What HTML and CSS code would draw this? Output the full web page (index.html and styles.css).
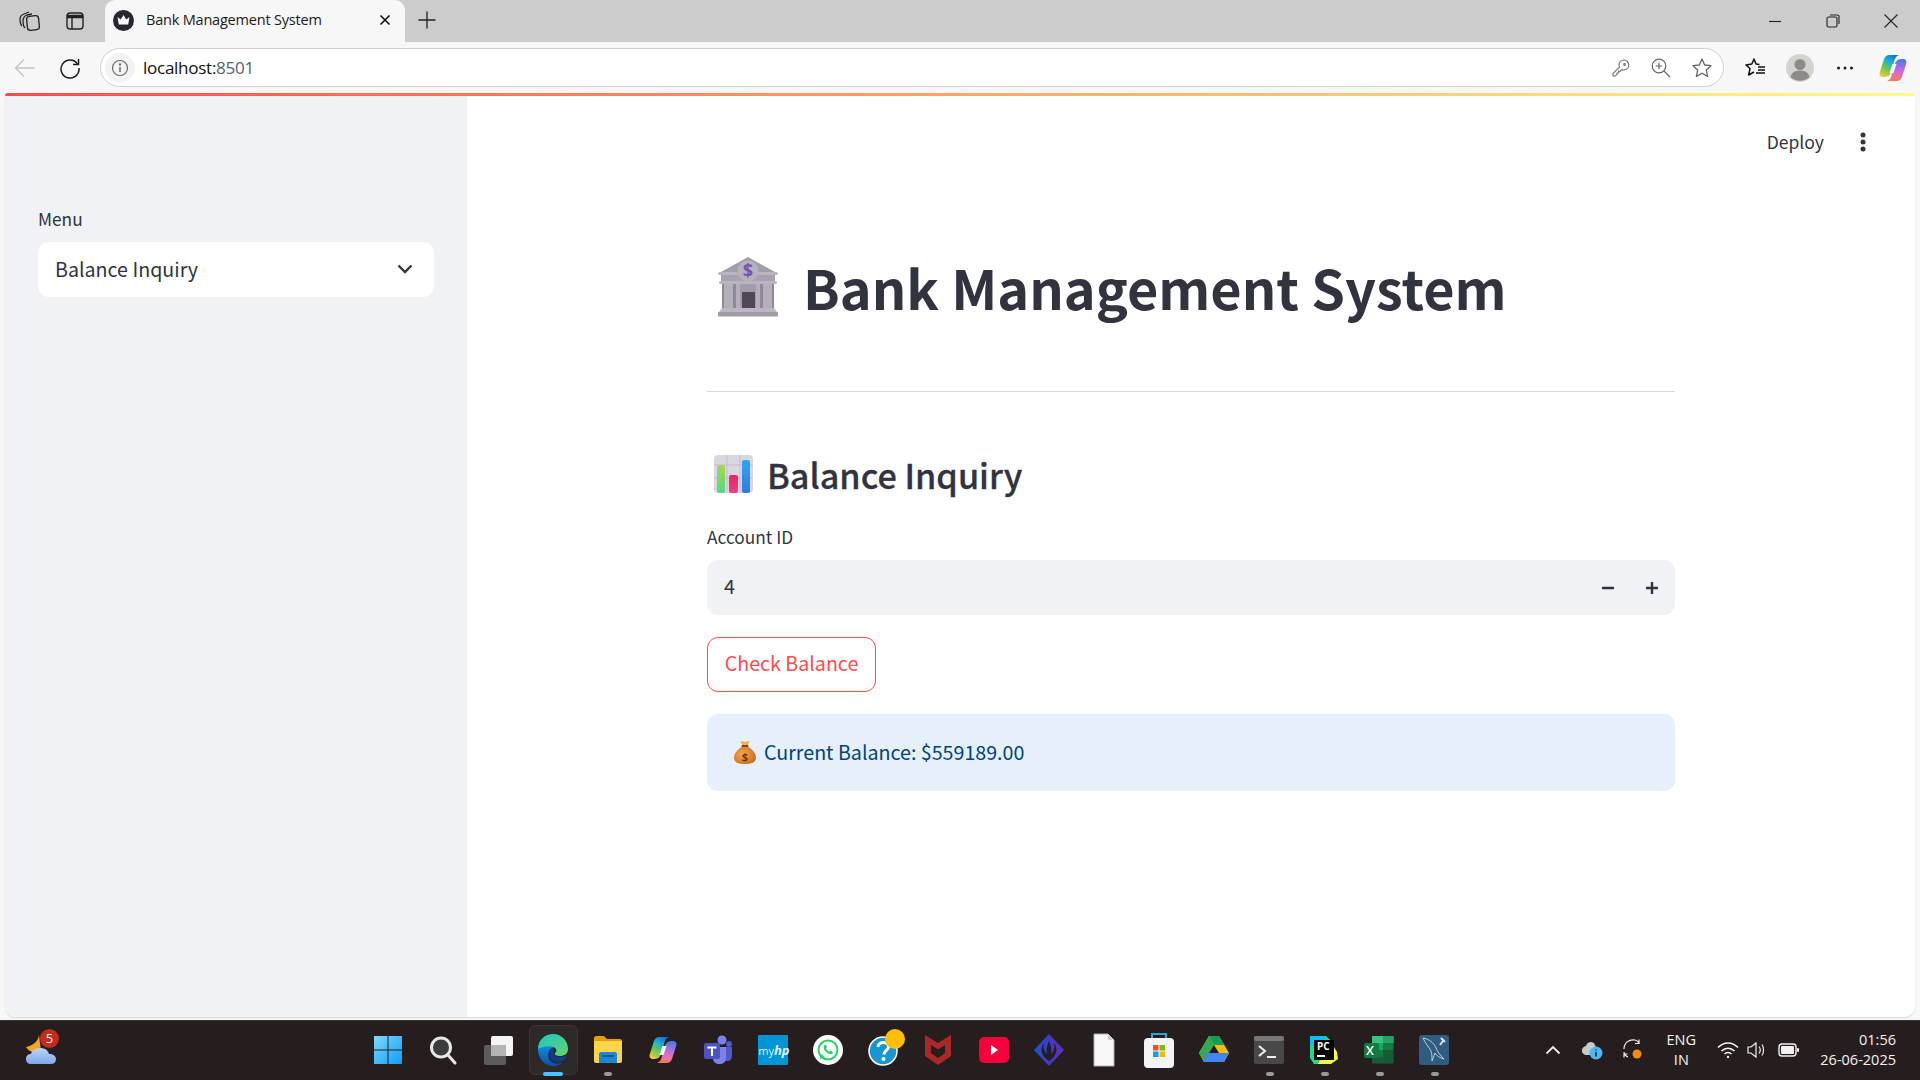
FILE: index.html
```html
<!DOCTYPE html>
<html lang="en">
<head>
<meta charset="utf-8">
<title>Bank Management System</title>
<link rel="stylesheet" href="styles.css">
</head>
<body>
<svg class="defs" width="0" height="0">
  <defs>
    <linearGradient id="cpA" x1=".7" y1="0" x2=".2" y2="1"><stop offset="0" stop-color="#1b6fe0"/><stop offset=".3" stop-color="#18b0d8"/><stop offset=".65" stop-color="#6fcb4a"/><stop offset="1" stop-color="#f6c83c"/></linearGradient>
    <linearGradient id="cpB" x1=".6" y1="0" x2=".5" y2="1"><stop offset="0" stop-color="#3a7ee8"/><stop offset=".4" stop-color="#b16be6"/><stop offset=".75" stop-color="#ef6fb0"/><stop offset="1" stop-color="#f47c50"/></linearGradient>
    <symbol id="copilot" viewBox="0 0 28 28">
      <path d="M18 27H8c3-1 4-3 5-7l2.500-9c.8-3 3-6 7-6H24c2.500 0 4 2 3.300 4.500L23 23c-1 2.500-3 4-5 4z" fill="url(#cpB)"/>
      <path d="M10 1h10c-3 1-4 3-5 7l-2.500 9c-.8 3-3 6-7 6H4c-2.500 0-4-2-3.300-4.500L5 5C6 2.500 8 1 10 1z" fill="url(#cpA)"/>
      <path d="M13.500 10h4l-3 9h-4z" fill="#fff"/>
    </symbol>
  </defs>
</svg>
<div class="tabbar">
  <div class="tb-left">
    <svg class="ic" width="24" height="24" viewBox="0 0 24 24" fill="none" stroke="#222" stroke-width="1.3"><rect x="9" y="7" width="12" height="14" rx="3" transform="rotate(-6 15 14)"/><path d="M7 19C5 17 5 15 5 12c0-3 1-5 4-6l5-1"/><path d="M4 17C2 15 2 13 2 10c0-3 1-4 4-5l5-2"/></svg>
    <svg class="ic" width="24" height="24" viewBox="0 0 24 24" fill="none" stroke="#222" stroke-width="1.4"><rect x="4" y="4" width="16" height="16" rx="3"/><path d="M4 7.500h16" stroke-width="3.500"/><path d="M9 8v12"/></svg>
  </div>
  <div class="tab">
    <svg class="favicon" width="21" height="21" viewBox="0 0 21 21"><circle cx="10.500" cy="10.500" r="10.500" fill="#262730"/><path d="M4.500 7l3.200 2.500L10.500 5l2.800 4.500L16.500 7l-1.300 7.500H5.800z" fill="#fff"/></svg>
    <span class="tab-title">Bank Management System</span>
    <svg class="tab-x" width="14" height="14" viewBox="0 0 14 14" stroke="#111" stroke-width="1.600"><path d="M2.500 2.500l9 9M11.500 2.500l-9 9"/></svg>
  </div>
  <svg class="newtab" width="20" height="20" viewBox="0 0 20 20" stroke="#222" stroke-width="1.300"><path d="M10 1.500v17M1.500 10h17"/></svg>
  <div class="winctl">
    <svg width="16" height="16" viewBox="0 0 16 16" stroke="#222" stroke-width="1.100"><path d="M2 8.500h12"/></svg>
    <svg width="16" height="16" viewBox="0 0 16 16" fill="none" stroke="#222" stroke-width="1.100"><rect x="2" y="4" width="10" height="10" rx="1.500"/><path d="M5 2h7.500A1.500 1.500 0 0 1 14 3.500V11"/></svg>
    <svg width="16" height="16" viewBox="0 0 16 16" stroke="#222" stroke-width="1.100"><path d="M1.500 1.500l13 13M14.500 1.500l-13 13"/></svg>
  </div>
</div>
<div class="toolbar">
  <svg class="nav-back" width="22" height="22" viewBox="0 0 22 22" fill="none" stroke="#c4c4c4" stroke-width="1.400"><path d="M1.500 11h19M10 2.500L1.500 11l8.500 8.500"/></svg>
  <svg class="nav-reload" width="22" height="22" viewBox="0 0 22 22" fill="none" stroke="#1c1c1c" stroke-width="1.500"><path d="M18.500 7A9 9 0 1 0 20 11"/><path d="M19.500 2v5.500H14"/></svg>
  <div class="omnibox">
    <span class="info-pill"><svg width="18" height="18" viewBox="0 0 18 18" fill="none" stroke="#6b6b6b" stroke-width="1.200"><circle cx="9" cy="9" r="7.500"/><path d="M9 8v5" stroke-width="1.500"/><circle cx="9" cy="5.500" r=".6" fill="#6b6b6b"/></svg></span>
    <span class="url">localhost:<span class="url-port">8501</span></span>
    <span class="omni-icons">
      <svg width="20" height="20" viewBox="0 0 20 20" fill="none" stroke="#777" stroke-width="1.200"><path d="M12.800 2a5 5 0 0 1 5 5c0 3-2.300 5-5 5-.8 0-1.400-.1-2-.4L9 13.300H7.500V15H6v1.500L4 18H2v-2.500l6.500-6.300c-.3-.7-.5-1.400-.5-2.200a5 5 0 0 1 4.800-5z"/><circle cx="13.500" cy="6.500" r=".8"/></svg>
      <svg width="20" height="20" viewBox="0 0 20 20" fill="none" stroke="#666" stroke-width="1.200"><circle cx="8" cy="8" r="6.800"/><path d="M13 13l6 6M8 4.800v6.400M4.800 8h6.400"/></svg>
      <svg width="22" height="22" viewBox="0 0 22 22" fill="none" stroke="#666" stroke-width="1.300" stroke-linejoin="round"><path d="M11 2l2.700 6 6.300.7-4.700 4.300 1.300 6.400L11 16.200l-5.600 3.200 1.300-6.400L2 8.700 8.300 8z"/></svg>
    </span>
  </div>
  <div class="tool-right">
    <svg width="22" height="22" viewBox="0 0 22 22" fill="none" stroke="#111" stroke-width="1.500" stroke-linejoin="round"><path d="M15.500 7.500L12 7 10 2 7.800 7 2 8l4 3.500L4.700 18l5.300-3"/><path d="M14 10h7M14 13h7M12 16h9" stroke-width="1.300"/></svg>
    <span class="avatar"><svg width="28" height="28" viewBox="0 0 28 28"><circle cx="14" cy="14" r="14" fill="#d4d3cf"/><circle cx="14" cy="10.500" r="5.500" fill="#8f8c87"/><path d="M4.500 23c1-4.500 5-6.500 9.500-6.500s8.500 2 9.500 6.500a14 14 0 0 1-19 0z" fill="#8f8c87"/></svg></span>
    <svg class="dots" width="18" height="6" viewBox="0 0 18 6" fill="#1a1a1a"><circle cx="2.500" cy="3" r="1.500"/><circle cx="9" cy="3" r="1.500"/><circle cx="15.500" cy="3" r="1.500"/></svg>
    <svg class="cp" width="28" height="28" viewBox="0 0 28 28"><use href="#copilot"/></svg>
  </div>
</div>
<div class="viewport">
  <div class="rainbow"></div>
  <div class="app">
    <aside class="sidebar">
      <label class="sb-label">Menu</label>
      <div class="select">
        <span>Balance Inquiry</span>
        <svg width="16" height="10" viewBox="0 0 16 10" fill="none" stroke="#31333f" stroke-width="2.400"><path d="M1.500 1.500L8 8l6.500-6.500"/></svg>
      </div>
    </aside>
    <main class="main">
      <div class="st-header">
        <span class="deploy">Deploy</span>
        <svg class="kebab" width="6" height="20" viewBox="0 0 6 20" fill="#31333f"><circle cx="3" cy="3" r="2.500"/><circle cx="3" cy="10" r="2.500"/><circle cx="3" cy="17" r="2.500"/></svg>
      </div>
      <div class="content">
        <h1 class="title">
          <svg class="e-bank" width="60" height="60" viewBox="0 0 60 60">
            <path d="M30 0L3 15h54z" fill="#a39dab"/>
            <rect x="4" y="27" width="52" height="24" fill="#8f8996"/>
            <rect x="6" y="27" width="9" height="24" fill="#b5afbb"/>
            <rect x="18" y="27" width="4" height="24" fill="#b5afbb"/>
            <rect x="38" y="27" width="4" height="24" fill="#b5afbb"/>
            <rect x="45" y="27" width="9" height="24" fill="#b5afbb"/>
            <rect x="22" y="27" width="16" height="24" fill="#a29ca9"/>
            <rect x="24" y="35" width="13" height="16" fill="#4f4658"/>
            <rect x="0" y="15" width="60" height="3" rx="1.500" fill="#bab4c0"/>
            <rect x="3" y="18" width="54" height="6" fill="#a8a2b0"/>
            <rect x="1" y="24" width="58" height="3" rx="1.500" fill="#bab4c0"/>
            <circle cx="30" cy="14" r="10.500" fill="#b7b1bd"/>
            <text class="e-dollar" x="30" y="20" text-anchor="middle">$</text>
            <path d="M4 51h52l3 4H1z" fill="#bcb6c2"/>
            <rect x="0" y="55" width="60" height="4.500" rx="1" fill="#a29ca9"/>
          </svg>
          <span>Bank Management System</span>
        </h1>
        <hr class="rule">
        <h2 class="subtitle">
          <svg class="e-chart" width="39" height="38" viewBox="0 0 39 38">
            <defs>
              <linearGradient id="chG" x1="0" y1="0" x2="0" y2="1"><stop offset="0" stop-color="#a8d850"/><stop offset="1" stop-color="#54d88a"/></linearGradient>
              <linearGradient id="chR" x1="0" y1="0" x2="0" y2="1"><stop offset="0" stop-color="#e8245c"/><stop offset="1" stop-color="#ea3f8a"/></linearGradient>
              <linearGradient id="chB" x1="0" y1="0" x2="0" y2="1"><stop offset="0" stop-color="#2ba8f0"/><stop offset="1" stop-color="#2f7be0"/></linearGradient>
            </defs>
            <rect width="39" height="38" rx="4" fill="#dcd6e3"/>
            <path d="M13 0v38M26 0v38M0 10h39M0 23h39" stroke="#c5bfcd" stroke-width="1"/>
            <rect x="3" y="10" width="8" height="28" rx="2" fill="url(#chG)"/>
            <rect x="15" y="20" width="9" height="18" rx="2" fill="url(#chR)"/>
            <rect x="28" y="5" width="8" height="33" rx="2" fill="url(#chB)"/>
          </svg>
          <span>Balance Inquiry</span>
        </h2>
        <label class="field-label">Account ID</label>
        <div class="number">
          <span class="num-value">4</span>
          <svg class="num-btn" width="56" height="14" viewBox="0 0 56 14" stroke="#31333f" stroke-width="2.400" fill="none"><path d="M0 7h12M56 7H44M50 1v12"/></svg>
        </div>
        <button class="btn" type="button">Check Balance</button>
        <div class="alert">
          <svg class="e-bag" width="22" height="24" viewBox="0 0 22 24">
            <defs><radialGradient id="bagG" cx=".4" cy=".45" r=".7"><stop offset="0" stop-color="#f5a94a"/><stop offset="1" stop-color="#c86a1e"/></radialGradient></defs>
            <path d="M6.500 1.500c2-.8 3 .3 4.500.3S13.500.7 15.500 1.500L13.500 6h-5z" fill="#f0b04a"/>
            <path d="M8 6.500h6c4.500 3 8 7 8 11 0 4.500-3.500 6.500-11 6.500S0 22 0 17.500c0-4 3.500-8 8-11z" fill="url(#bagG)"/>
            <rect x="7.500" y="5" width="7" height="2" rx="1" fill="#7c4a20"/>
            <text class="e-dollar2" x="11" y="20.500" text-anchor="middle">$</text>
          </svg>
          <span>Current Balance: $559189.00</span>
        </div>
      </div>
    </main>
  </div>
</div>
<footer class="taskbar">
  <div class="weather">
    <svg width="30" height="29" viewBox="0 0 30 29">
      <defs><linearGradient id="cloudG" x1="0" y1="0" x2="0" y2="1"><stop offset="0" stop-color="#bcd3f8"/><stop offset="1" stop-color="#7da8ec"/></linearGradient></defs>
      <path d="M13 0C12 6 8 10 0 12c3 5 9 7 15 4z" fill="#f5a623"/>
      <path d="M5 29c-3 0-5-2-5-5 0-3 2-5 5-5 .5-3 4-6 9-6 4.500 0 8 2 9 6 4 0 7 2 7 5 0 3-2 5-5 5z" fill="url(#cloudG)"/>
    </svg>
    <span class="badge">5</span>
  </div>
  <div class="apps">
    <span class="slot"><svg width="30" height="30" viewBox="0 0 30 30"><defs><linearGradient id="wG" x1="0" y1="0" x2="1" y2="1"><stop offset="0" stop-color="#7fd9ff"/><stop offset="1" stop-color="#0f9bf5"/></linearGradient></defs><path d="M1 1h13.500v13.500H1zM15.500 1H29v13.500H15.500zM1 15.500h13.500V29H1zM15.500 15.500H29V29H15.500z" fill="url(#wG)"/></svg></span>
    <span class="slot"><svg width="28" height="30" viewBox="0 0 28 30" fill="#3c3c3c" stroke="#e8e8e8" stroke-width="3"><circle cx="12" cy="12.500" r="9.500"/><path d="M19 20l7 8" stroke-linecap="round"/></svg></span>
    <span class="slot"><svg width="30" height="30" viewBox="0 0 30 30"><rect x="1" y="10" width="22" height="20" rx="2" fill="#5c5c5c"/><rect x="8" y="1" width="22" height="20" rx="2" fill="#f4f4f4"/><rect x="8" y="10" width="15" height="11" fill="#b4b4b4"/></svg></span>
    <span class="slot slot-active"><svg width="32" height="34" viewBox="0 0 32 34"><defs><linearGradient id="eA" x1="0" y1="0" x2="1" y2="1"><stop offset="0" stop-color="#1ec4c8"/><stop offset="1" stop-color="#64d66a"/></linearGradient><linearGradient id="eB" x1="0" y1="0" x2="0" y2="1"><stop offset="0" stop-color="#0f8ed8"/><stop offset="1" stop-color="#0b4fa8"/></linearGradient></defs><path d="M1 16C1 7 8 1 16 1c9 0 15 7 15 15 0 5-4 7-8 7-3 0-6-1-5-3 1-1 2-2 1-4-2-3-8-3-11 1C5 20 5 19 1 16z" fill="url(#eA)"/><path d="M1 16c0 10 7 17 15 17 4 0 7-1 9-3-5 2-11 0-13-4-2-5 0-10 5-12-6-2-13 0-16 2z" fill="url(#eB)"/><path d="M12 20c0 6 5 10 11 9 4-1 6-3 7-6-2 1-4 1-7 1-5 0-7-2-6-6 1-2 0-3-1-3-3 0-4 3-4 5z" fill="#0b3f8c"/></svg></span>
    <span class="slot slot-open"><svg width="30" height="30" viewBox="0 0 30 30"><path d="M1 3c0-1 1-2 2-2h8l3 3h13c1 0 2 1 2 2v4H1z" fill="#e2a100"/><path d="M1 6h28v20c0 1-1 2-2 2H3c-1 0-2-1-2-2z" fill="#fcd34d"/><path d="M6 19c0-1 1-2 2-2h14c1 0 2 1 2 2v9H6z" fill="#1e88d8"/><rect x="9" y="20" width="12" height="2" fill="#0a5aa0"/></svg></span>
    <span class="slot"><svg width="28" height="28" viewBox="0 0 28 28"><use href="#copilot"/></svg></span>
    <span class="slot"><svg width="30" height="30" viewBox="0 0 30 30"><circle cx="19" cy="5" r="4.500" fill="#7b83eb"/><circle cx="26" cy="9" r="3" fill="#5059c9"/><path d="M21 12h8v9c0 3-2 5-4 5h-4z" fill="#5059c9"/><path d="M10 12h13v11c0 4-3 6-6.500 6S10 27 10 23z" fill="#7b83eb"/><rect x="1" y="8" width="16" height="16" rx="2" fill="#4b53bc"/><path d="M4.500 11.500h9v2H10V21H8v-7.500H4.500z" fill="#fff"/></svg></span>
    <span class="slot"><span class="myhp">my<i>hp</i></span></span>
    <span class="slot"><svg width="30" height="30" viewBox="0 0 30 30"><circle cx="15" cy="15" r="15" fill="#fff"/><circle cx="15" cy="15" r="9.500" fill="none" stroke="#25d366" stroke-width="2"/><path d="M7 24l1.500-5 3.500 3.500z" fill="#25d366"/><path d="M11 10.500c1-1.200 2-1 2.300 0l.6 1.600-1 1.200c.6 1.500 2 2.800 3.500 3.400l1.200-1 1.500.7c1 .5 1 1.500 0 2.300-3 2-10-3.500-8.100-8.200z" fill="#25d366"/></svg></span>
    <span class="slot slot-help"><svg width="30" height="32" viewBox="0 0 30 32"><circle cx="15" cy="17" r="14" fill="#1796d2" stroke="#fff" stroke-width="1.500"/><path d="M10 13c0-3 2.500-4.500 5.500-4.500S20.500 10 20.500 13c0 3.500-4.500 3.500-4.500 7.500" fill="none" stroke="#fff" stroke-width="3"/><circle cx="15.500" cy="25" r="2" fill="#fff"/></svg><span class="help-dot"></span></span>
    <span class="slot"><svg width="28" height="31" viewBox="0 0 28 31"><path d="M1 1l13 8 13-8v21L14 31 1 22z" fill="#a82a28"/><path d="M7 11v8l7 5 7-5v-8l-7 4.500z" fill="#261e1e"/></svg></span>
    <span class="slot"><svg width="30" height="26" viewBox="0 0 30 26"><rect width="30" height="26" rx="5" fill="#f5003a"/><path d="M12 8l7 5-7 5z" fill="#fff"/></svg></span>
    <span class="slot"><svg width="30" height="32" viewBox="0 0 30 32"><defs><linearGradient id="ideG" x1="0" y1="0" x2="1" y2="0"><stop offset="0" stop-color="#1f56c8"/><stop offset=".5" stop-color="#3a3cc4"/><stop offset="1" stop-color="#6a2cc0"/></linearGradient></defs><path d="M15 0l15 16-15 16L0 16z" fill="url(#ideG)"/><path d="M10 9C5 15 8 23 15 27c7-4 10-12 5-18 1 5 0 8-3 11 1-4 0-9-2-13-2 4-3 9-2 13-3-3-4-6-3-11z" fill="#261e1e"/></svg></span>
    <span class="slot"><svg width="22" height="34" viewBox="0 0 22 34"><path d="M1 1h14l6 6v26H1z" fill="#f8f8f8" stroke="#b0b0b0" stroke-width="1"/><path d="M15 1v6h6z" fill="#cfcfcf"/></svg></span>
    <span class="slot"><svg width="30" height="36" viewBox="0 0 30 36"><path d="M8 10V2h14v8" fill="none" stroke="#2aa6e0" stroke-width="2"/><rect y="6" width="30" height="30" rx="4" fill="#f4f4f4"/><rect x="9" y="13" width="5.500" height="5.500" fill="#f25022"/><rect x="15.500" y="13" width="5.500" height="5.500" fill="#7fba00"/><rect x="9" y="19.500" width="5.500" height="5.500" fill="#00a4ef"/><rect x="15.500" y="19.500" width="5.500" height="5.500" fill="#ffb900"/></svg></span>
    <span class="slot"><svg width="30" height="28" viewBox="0 0 30 28"><path d="M10 0h10l10 17-5 9H5L0 17z" fill="#fbbc04"/><path d="M10 0L0 17l5 9 10-17z" fill="#34a853"/><path d="M10 0h10l5 9H15z" fill="#0f9d58"/><path d="M8 17h22l-5 9H5z" fill="#4285f4"/><path d="M15 9l5 8H10z" fill="#261e1e"/></svg></span>
    <span class="slot slot-open"><svg width="30" height="28" viewBox="0 0 30 28"><rect width="30" height="28" rx="2" fill="#484848"/><rect width="30" height="5" rx="2" fill="#777"/><path d="M5 10l6 5-6 5" fill="none" stroke="#f0f0f0" stroke-width="2"/><path d="M13 21h9" stroke="#f0f0f0" stroke-width="2"/></svg></span>
    <span class="slot slot-open"><svg width="30" height="30" viewBox="0 0 30 30"><path d="M1 1h16l6 6-10 22H5L1 23z" fill="#21d789"/><path d="M1 1h15v10H1z" fill="#07c3f2"/><path d="M20 4l8 13 1 7-7 5H9z" fill="#fcf84a"/><rect x="5" y="5" width="20" height="20" fill="#000"/><text class="pc-text" x="8" y="15">PC</text><path d="M8 21h8" stroke="#fff" stroke-width="2"/></svg></span>
    <span class="slot slot-open"><svg width="30" height="30" viewBox="0 0 30 30"><path d="M8 1h20c1 0 1.500.5 1.500 1.500V8H8z" fill="#33c481"/><path d="M19 1h9.500c.5 0 1 .5 1 1V8H19z" fill="#21a366"/><rect x="8" y="8" width="11" height="7" fill="#21a366"/><rect x="19" y="8" width="10.500" height="7" fill="#107c41"/><rect x="8" y="15" width="11" height="7" fill="#107c41"/><rect x="19" y="15" width="10.500" height="7" fill="#185c37"/><path d="M8 22h21.500v5c0 1-.5 1.500-1.500 1.500H9.500C8.500 28.500 8 28 8 27z" fill="#185c37"/><rect y="8" width="15" height="15" rx="2" fill="#107c41"/><path d="M4 11l2 3.500 2-3.500h2l-3 4.500 3 4.500H8l-2-3.500L4 20H2l3-4.500L2 11z" fill="#fff"/></svg></span>
    <span class="slot slot-open"><svg width="30" height="30" viewBox="0 0 30 30"><rect width="30" height="30" rx="3" fill="#2f5c80"/><path d="M4 3c6 1 11 5 13 10 1 3 4 7 8 11-4-1-7-3-9-6l-3 8c0-4 0-7-1-10C10 12 6 8 4 3z" fill="none" stroke="#b9cedd" stroke-width="1"/><path d="M22 3l4 4M24 6l-3 4" stroke="#d8e4ee" stroke-width="2"/></svg></span>
  </div>
  <div class="tray">
    <svg class="t-chev" width="16" height="10" viewBox="0 0 16 10" fill="none" stroke="#f2f2f2" stroke-width="1.800"><path d="M1.500 8.500L8 2l6.500 6.500"/></svg>
    <svg class="t-cloud" width="22" height="20" viewBox="0 0 22 20"><path d="M3 14c-3-1-3-7 2-8 1-4 7-6 9-1 1 2 1 3 0 4l-3 6H4z" fill="#c9c9c9"/><circle cx="15" cy="13" r="6.500" fill="#4fb8ee"/><path d="M15 9.500v1M15 12v4.500" stroke="#10304a" stroke-width="1.600"/></svg>
    <svg class="t-sync" width="22" height="24" viewBox="0 0 22 24" fill="none" stroke="#eee" stroke-width="1.200"><path d="M2 11C2 5 7 1 13 2c2 .4 3 1 4 3M17 1.500V5.500H13"/><path d="M6 19c-2-1-4-3-4-5M2 19.500V16h3.500"/><circle cx="15" cy="16" r="4.500" fill="#f58a07" stroke="none"/></svg>
    <div class="lang"><span>ENG</span><span>IN</span></div>
    <svg class="t-wifi" width="22" height="18" viewBox="0 0 22 18" fill="none" stroke="#f5f5f5" stroke-width="1.600"><path d="M1 6.500c6-6 14-6 20 0M4.500 10c4-3.500 9-3.500 13 0M7.500 13c2-1.800 5-1.800 7 0"/><circle cx="11" cy="16" r="1.200" fill="#f5f5f5" stroke="none"/></svg>
    <svg class="t-vol" width="20" height="18" viewBox="0 0 20 18" fill="none" stroke="#f0f0f0" stroke-width="1.200"><path d="M1 6h3l5-4v14l-5-4H1z"/><path d="M12 5.500c1.500 2 1.500 5 0 7M15 3.500c2 3 2 8 0 11"/></svg>
    <svg class="t-bat" width="22" height="14" viewBox="0 0 22 14"><rect x="1" y="1" width="17" height="12" rx="3" fill="none" stroke="#f2f2f2" stroke-width="1.400"/><rect x="3" y="3" width="13" height="8" rx="1" fill="#f2f2f2"/><rect x="19" y="5" width="2" height="4" rx="1" fill="#f2f2f2"/></svg>
    <div class="clock"><span>01:56</span><span>26-06-2025</span></div>
  </div>
</footer>
</body>
</html>
```

FILE: styles.css
```css
* { box-sizing: border-box; }
html, body { margin: 0; padding: 0; }
body {
  width: 1920px; height: 1080px; overflow: hidden;
  display: flex; flex-direction: column;
  background: #f7f7f7;
  font-family: "Noto Sans CJK SC", "Noto Sans", sans-serif;
  color: #31333f;
}
svg { display: block; flex: none; }
.defs { position: absolute; }

/* browser tab strip */
.tabbar { height: 42px; background: #cccccc; display: flex; align-items: center; flex: none; }
.tb-left { display: flex; gap: 21px; padding-left: 18px; width: 105px; }
.tab {
  width: 300px; height: 42px; background: #f7f7f7; border-radius: 10px 10px 0 0;
  display: flex; align-items: center; padding: 0 13px 2px 8px;
}
.tab-title { font: 14.500px/20px "Open Sans", sans-serif; color: #1a1a1a; margin-left: 12px; flex: 1; letter-spacing: -.2px; }
.newtab { margin: 0 0 2px 12px; }
.winctl { margin-left: auto; display: flex; gap: 42px; padding-right: 21px; }

/* browser toolbar */
.toolbar { height: 51px; flex: none; display: flex; align-items: center; padding: 0 13px 0 14px; }
.nav-reload { margin-left: 23px; }
.omnibox {
  margin-left: 19px; width: 1624px; height: 39px; background: #fff;
  border: 1.500px solid #cfcfcf; border-radius: 20px;
  display: flex; align-items: center; padding: 0 10px 0 4px;
}
.info-pill { width: 30px; height: 30px; border-radius: 50%; background: #f3f3f3; display: flex; align-items: center; justify-content: center; }
.url { font: 17.100px/24px "Open Sans", sans-serif; color: #111; margin-left: 8px; letter-spacing: -.3px; }
.url-port { color: #5a6270; }
.omni-icons { margin-left: auto; display: flex; align-items: center; gap: 20px; }
.tool-right { margin-left: 20px; display: flex; align-items: center; gap: 20px; }
.avatar { display: block; }
.dots { margin-left: 2px; }
.cp { margin-left: 5px; }

/* page card */
.viewport { height: 927px; flex: none; padding: 0 5px; display: flex; flex-direction: column; position: relative; }
.rainbow { height: 3px; flex: none; background: linear-gradient(90deg, #ff4b4b, #fffd80); border-radius: 10px 10px 0 0; }
.app { height: 921px; display: flex; background: #fff; border-radius: 0 0 10px 10px; overflow: hidden; box-shadow: 0 1px 1px #d8d8d8; }
.sidebar { width: 462px; flex: none; background: #f0f2f6; padding: 110px 33px 0; }
.sb-label { display: block; font-size: 17.300px; line-height: 26px; }
.select {
  margin-top: 10px; height: 55px; background: #fff; border-radius: 11px;
  display: flex; align-items: center; justify-content: space-between;
  padding: 0 21px 2px 17px; font-size: 19.650px;
}
.main { flex: 1; display: flex; flex-direction: column; align-items: center; }
.st-header { width: 100%; display: flex; justify-content: flex-end; align-items: center; gap: 36px; padding: 31px 49px 0; height: 60px; }
.deploy { font-size: 17.500px; line-height: 26px; }
.content { width: 968px; }
.title { margin: 92px 0 0; display: flex; align-items: center; height: 78px; font-size: 54px; font-weight: 700; line-height: 78px; }
.e-bank { margin: 0 25px 0 11px; }
.e-dollar { font: 700 18px "Noto Sans", sans-serif; fill: #7c4fb8; }
.rule { margin: 65px 0 0; border: 0; height: 1px; background: #d5d6d9; }
.subtitle { margin: 62px 0 0; display: flex; align-items: center; height: 40px; font-size: 34.200px; font-weight: 500; line-height: 40px; -webkit-text-stroke: .3px #31333f; }
.e-chart { margin: 0 14px 0 7px; }
.field-label { display: block; margin-top: 30px; font-size: 17.300px; line-height: 26px; }
.number {
  margin-top: 10px; height: 55px; background: #f0f2f6; border-radius: 11px;
  display: flex; align-items: center; justify-content: space-between;
  padding: 0 17px 0; font-size: 19.650px;
}
.num-value { position: relative; top: -2px; }
.btn {
  display: block; margin-top: 22px; height: 55px; width: 169px; padding: 0 0 3px;
  background: #fff; border: 1px solid #ff4b4b; border-radius: 11px;
  color: #ff4b4b; font: 400 19.650px/30px "Noto Sans CJK SC", sans-serif;
}
.alert {
  margin-top: 22px; height: 77px; background: #e6f0fa; border-radius: 11px;
  display: flex; align-items: center; padding: 0 0 3px 27px; gap: 8px;
  font-size: 19.650px; color: #004280;
}
.e-bag { position: relative; top: 1px; }
.e-dollar2 { font: 700 11px "Noto Sans", sans-serif; fill: #6b3a10; }

/* taskbar */
.taskbar { height: 60px; flex: none; background: #261e1e; display: flex; align-items: center; padding: 0 24px 2px 26px; border-top: 1px solid #3a3434; position: relative; }
.weather { width: 30px; height: 57px; display: flex; align-items: center; position: relative; }
.badge { position: absolute; left: 14px; top: 8px; width: 19px; height: 19px; border-radius: 50%; background: #c42b1c; color: #fff; font: 13px/19px "Open Sans", sans-serif; text-align: center; }
.apps { display: flex; margin-left: 304px; }
.slot { width: 55.100px; height: 57px; display: flex; align-items: center; justify-content: center; position: relative; }
.slot-active::before { content: ""; position: absolute; left: 4px; right: 2px; top: 4px; bottom: 3px; background: #2e2929; border-radius: 6px; border: 1px solid #3a3535; }
.slot-active svg { position: relative; }
.slot-active::after { content: ""; position: absolute; left: 18px; width: 20px; height: 4px; bottom: 2px; border-radius: 2px; background: #4cc2ff; }
.slot-open::after { content: ""; position: absolute; left: 24px; width: 8px; height: 4px; bottom: 2px; border-radius: 2px; background: #9a9a9a; }
.myhp { width: 30px; height: 30px; background: #0096d6; border-radius: 1px; color: #dff3ff; font: 400 11px/30px "Open Sans", sans-serif; text-align: center; }
.myhp i { font-weight: 700; font-size: 13px; }
.help-dot { position: absolute; left: 29px; top: 8px; width: 20px; height: 20px; border-radius: 50%; background: #fdbf0b; }
.pc-text { font: 700 10px "Noto Sans", sans-serif; fill: #fff; }
.tray { display: flex; align-items: center; margin-left: auto; color: #f2f2f2; font: 14.500px/20px "Open Sans", sans-serif; }
.t-chev { margin-right: 20px; }
.t-cloud { margin-right: 19px; }
.t-sync { margin-right: 17px; }
.lang { display: flex; flex-direction: column; align-items: center; width: 40px; margin-right: 16px; }
.t-wifi { margin-right: 8px; }
.t-vol { margin-right: 11px; }
.t-bat { margin-right: 20px; }
.clock { display: flex; flex-direction: column; align-items: flex-end; }
```
